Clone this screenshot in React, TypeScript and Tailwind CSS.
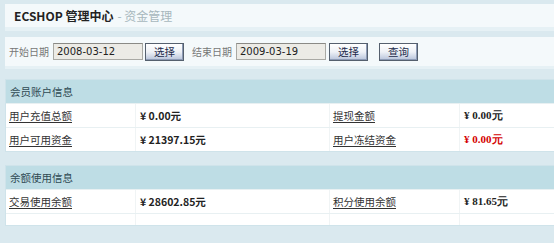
import React from 'react';

const sans = { fontFamily: '"Noto Sans CJK SC", "DejaVu Sans", sans-serif' };

function Btn({ children }: { children: React.ReactNode }) {
  return (
    <button className="h-[18px] w-[39px] text-[10.5px] leading-[14px] text-[#1c2a4a] border border-[#55606e] bg-gradient-to-b from-[#ffffff] via-[#eef1f6] to-[#b7c3da] shadow-[inset_-1px_-1px_0_#8d9bb6]">
      {children}
    </button>
  );
}

function DateInput({ value }: { value: string }) {
  return (
    <div className="w-[90px] h-[17px] border border-[#a9a9a4] border-t-[#8a8a86] bg-[#ecebe6] px-[3px] text-[10px] leading-[15px] text-[#222] font-['DejaVu_Sans']">
      {value}
    </div>
  );
}

type Cell = { label?: string; value?: string; red?: boolean; serif?: boolean };

function Section({ title, rows }: { title: string; rows: [Cell, Cell][] }) {
  return (
    <div className="border border-[#cfe3ea] bg-white">
      <div className="h-[23px] flex items-center pl-[4px] bg-[#bedde5] text-[10.5px] text-[#2f4a53]">{title}</div>
      {rows.map((r, i) => (
        <div
          key={i}
          className={`grid grid-cols-[130px_194px_130px_194px] border-t border-[#e8f0f2] ${r[0].label ? 'h-[24px]' : 'h-[12px]'}`}
        >
          {r.map((c, j) => (
            <React.Fragment key={j}>
              <div className="flex items-center pl-[3px] border-r border-[#f0f4f5] text-[10.5px] text-[#333] underline underline-offset-2">
                {c.label}
              </div>
              <div
                className={`flex items-center pl-[4px] border-r border-[#f0f4f5] font-bold ${
                  c.red ? 'text-[#d40000]' : 'text-[#222]'
                } ${c.serif ? "font-['Liberation_Serif'] text-[11px]" : 'text-[10.5px]'}`}
              >
                {c.value}
              </div>
            </React.Fragment>
          ))}
        </div>
      ))}
    </div>
  );
}

export default function App() {
  return (
    <div className="w-[554px] h-[243px] overflow-hidden bg-[#dae9ef]" style={sans}>
      <div className="w-[660px] pl-[5px] pt-[4px] flex flex-col">
        {/* 标题 */}
        <div className="h-[27px] flex items-center pl-[9px] bg-[#f4f9fb] border-b-[4px] border-[#e6f1f5]">
          <span className="text-[12px] font-bold text-[#222]">ECSHOP 管理中心</span>
          <span className="text-[12px] text-[#a7b7bd] ml-[4px]">- 资金管理</span>
        </div>

        {/* 搜索 */}
        <div className="mt-[6px] h-[32px] flex items-center pl-[4px] bg-[#f4f9fb] border-b-[3px] border-[#e6f1f5] text-[10px] text-[#777]">
          <span>开始日期</span>
          <div className="ml-[4px]"><DateInput value="2008-03-12" /></div>
          <div className="ml-[2px]"><Btn>选择</Btn></div>
          <span className="ml-[8px]">结束日期</span>
          <div className="ml-[4px]"><DateInput value="2009-03-19" /></div>
          <div className="ml-[3px]"><Btn>选择</Btn></div>
          <div className="ml-[11px]"><Btn>查询</Btn></div>
        </div>

        <div className="mt-[10px]">
          <Section
            title="会员账户信息"
            rows={[
              [
                { label: '用户充值总额', value: '¥ 0.00元' },
                { label: '提现金额', value: '¥ 0.00元', serif: true },
              ],
              [
                { label: '用户可用资金', value: '¥ 21397.15元' },
                { label: '用户冻结资金', value: '¥ 0.00元', serif: true, red: true },
              ],
            ]}
          />
        </div>

        <div className="mt-[13px]">
          <Section
            title="余额使用信息"
            rows={[
              [
                { label: '交易使用余额', value: '¥ 28602.85元' },
                { label: '积分使用余额', value: '¥ 81.65元', serif: true },
              ],
              [{}, {}],
            ]}
          />
        </div>
      </div>
    </div>
  );
}
